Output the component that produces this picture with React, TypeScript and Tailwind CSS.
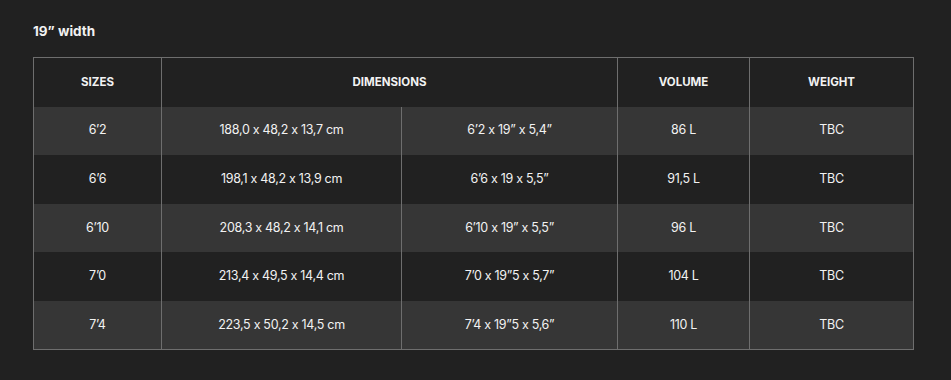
export default function App() {
  const rows = [
    ["6’2", "188,0 x 48,2 x 13,7 cm", "6’2 x 19” x 5,4”", "86 L", "TBC"],
    ["6’6", "198,1 x 48,2 x 13,9 cm", "6’6 x 19 x 5,5”", "91,5 L", "TBC"],
    ["6’10", "208,3 x 48,2 x 14,1 cm", "6’10 x 19” x 5,5”", "96 L", "TBC"],
    ["7’0", "213,4 x 49,5 x 14,4 cm", "7’0 x 19”5 x 5,7”", "104 L", "TBC"],
    ["7’4", "223,5 x 50,2 x 14,5 cm", "7’4 x 19”5 x 5,6”", "110 L", "TBC"],
  ];

  return (
    <div className="min-h-[380px] w-full bg-[#212121] pt-[22px] pl-[33px] pr-[38px] font-['Inter',sans-serif] text-[#f2f2f2]">
      <h2 className="text-[13.5px] font-bold leading-[18px] tracking-[0px]">19” width</h2>
      <table className="mt-[17px] w-[880px] table-fixed border-collapse border border-[#6e6e6e] text-center">
        <colgroup>
          <col className="w-[128px]" />
          <col className="w-[240px]" />
          <col className="w-[216px]" />
          <col className="w-[132px]" />
          <col className="w-[164px]" />
        </colgroup>
        <thead>
          <tr className="h-[49px] text-[11.5px] font-bold tracking-[0px]">
            <th className="border-r border-[#6e6e6e]">SIZES</th>
            <th colSpan={2} className="border-r border-[#6e6e6e]">DIMENSIONS</th>
            <th className="border-r border-[#6e6e6e]">VOLUME</th>
            <th>WEIGHT</th>
          </tr>
        </thead>
        <tbody className="text-[12.5px] tracking-[-0.3px]">
          {rows.map((r, i) => (
            <tr key={i} className={`h-[48.6px] ${i % 2 === 0 ? "bg-[#363636]" : "bg-[#212121]"}`}>
              <td className="border-r border-[#6e6e6e]">{r[0]}</td>
              <td className="border-r border-[#6e6e6e]">{r[1]}</td>
              <td className="border-r border-[#6e6e6e]">{r[2]}</td>
              <td className="border-r border-[#6e6e6e]">{r[3]}</td>
              <td>{r[4]}</td>
            </tr>
          ))}
        </tbody>
      </table>
    </div>
  );
}
